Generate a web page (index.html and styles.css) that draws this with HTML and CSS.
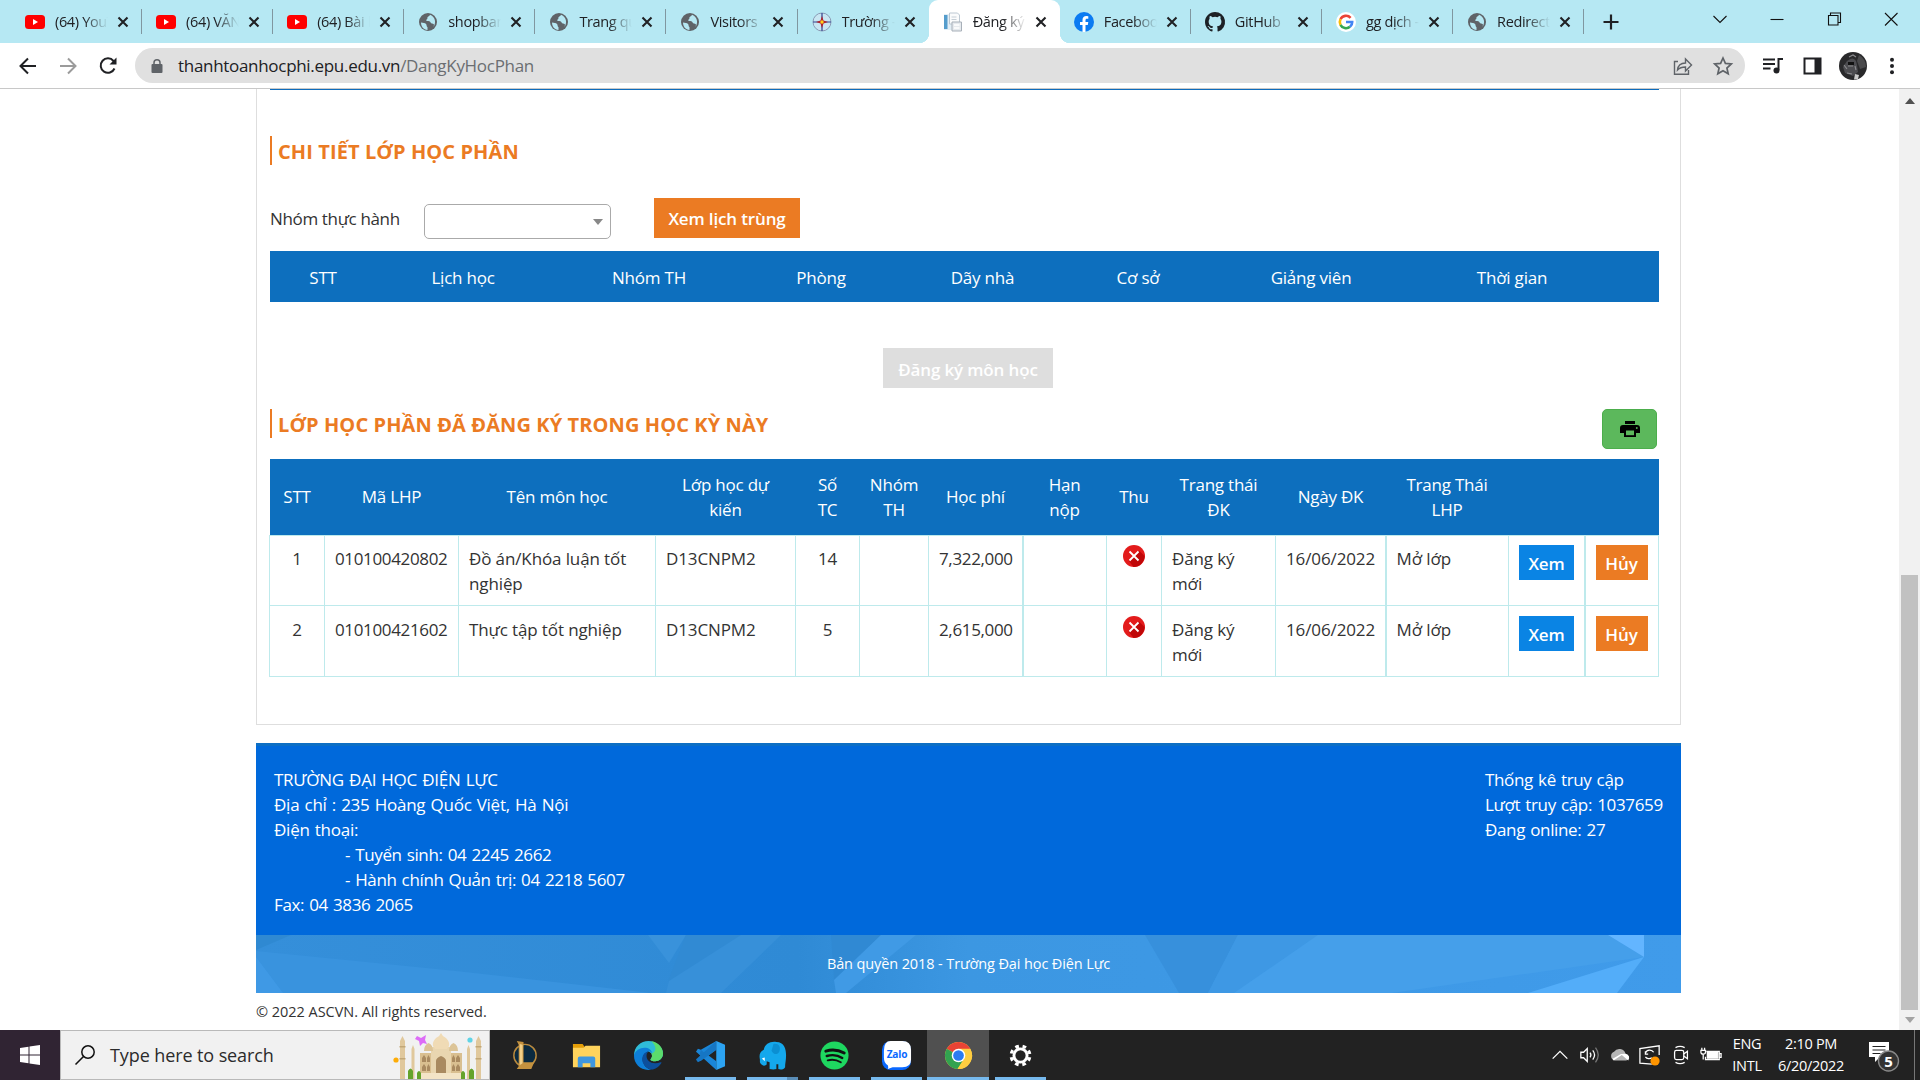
FILE: index.html
```html
<!DOCTYPE html>
<html lang="vi">
<head>
<meta charset="utf-8">
<title>Đăng ký học phần</title>
<link rel="stylesheet" href="styles.css">
</head>
<body>
<svg width="0" height="0" class="defs">
  <defs>
    <symbol id="yt" viewBox="0 0 20 20"><rect y="3" width="20" height="14" rx="3.5" fill="#f00"/><path d="M8 7v6l5-3z" fill="#fff"/></symbol>
    <symbol id="globe" viewBox="0 0 20 20"><circle cx="10" cy="10" r="9" fill="#5f6368"/><path d="M3 10.5c2 .5 4 .3 5 1.6 1 1.100.2 2.300 1.500 3.200V18C5.500 17.800 3 14.500 3 10.500zM12 2.800c-.3 1.500-1.500 1.400-2.300 2.200-.7.700.2 2-1 2.500-.8.300-.7 1.500.4 1.500 1.700 0 3 .2 3.500 1.500.4 1.200 2.400.7 3.200 1.800.5.800-.2 1.700-.3 2.400 2.500-3 2.500-9.500-3.500-11.900z" fill="#b6e8f3"/></symbol>
    <symbol id="x" viewBox="0 0 12 12"><path d="M1.500 1.500l9 9m0-9l-9 9" stroke="#202124" stroke-width="2.100" fill="none"/></symbol>
    <symbol id="fail" viewBox="0 0 22 22"><circle cx="11" cy="11" r="11" fill="#e31b1b"/><path d="M16 5.500l5.500 5.500a11 11 0 0 1-11 11L6 16z" fill="#c00708"/><path d="M6.500 6.500l9 9m0-9l-9 9" stroke="#fff" stroke-width="1.800"/></symbol>
  </defs>
</svg>

<div class="tabs">
  <div class="tab"><svg class="fav"><use href="#yt"/></svg><span>(64) YouTube</span><svg class="close"><use href="#x"/></svg></div>
  <div class="tab"><svg class="fav"><use href="#yt"/></svg><span>(64) VĂN MAI</span><svg class="close"><use href="#x"/></svg></div>
  <div class="tab"><svg class="fav"><use href="#yt"/></svg><span>(64) Bài hát</span><svg class="close"><use href="#x"/></svg></div>
  <div class="tab"><svg class="fav"><use href="#globe"/></svg><span>shopbanhang</span><svg class="close"><use href="#x"/></svg></div>
  <div class="tab"><svg class="fav"><use href="#globe"/></svg><span>Trang quản trị</span><svg class="close"><use href="#x"/></svg></div>
  <div class="tab"><svg class="fav"><use href="#globe"/></svg><span>Visitors</span><svg class="close"><use href="#x"/></svg></div>
  <div class="tab plain"><svg class="fav" viewBox="0 0 20 20"><circle cx="10" cy="10" r="9" fill="#c8e6f2" stroke="#8b9bb5"/><path d="M10 1v18M1 10h18" stroke="#31418c" stroke-width="1.200"/><path d="M10 4l1.500 4.500 4.500 1.500-4.500 1.500-1.500 4.500-1.500-4.500-4.500-1.500 4.500-1.500z" fill="#b3232b"/><circle cx="10" cy="10" r="1.700" fill="#ffd21c"/></svg><span>Trường - Đại</span><svg class="close"><use href="#x"/></svg></div>
  <div class="tab active"><svg class="fav" viewBox="0 0 20 20"><path d="M1 2h9v16H1z" fill="#e3eef5"/><path d="M1 3h3.500v14H1z" fill="#559dcc"/><path d="M6.500 1h8l2 2v9h-10z" fill="#fafbfc" stroke="#bcc8d2"/><path d="M8.500 5h5M8.500 7.500h5" stroke="#c5ced6"/><path d="M9 10h9.500v9H9z" fill="#e6eaee" stroke="#a8b0b9"/><path d="M11 13h5.500M11 16h5.500" stroke="#fff" stroke-width="1.500"/></svg><span>Đăng ký học</span><svg class="close"><use href="#x"/></svg></div>
  <div class="tab"><svg class="fav" viewBox="0 0 20 20"><circle cx="10" cy="10" r="10" fill="#0b7bf2"/><path d="M8.500 20v-7H6v-3h2.500V8c0-2.600 1.500-4 3.800-4l2 .2v2.500H13c-1.200 0-1.500.7-1.500 1.500V10h2.800l-.5 3h-2.300v7z" fill="#fff"/></svg><span>Facebook</span><svg class="close"><use href="#x"/></svg></div>
  <div class="tab"><svg class="fav" viewBox="0 0 16 16"><path fill="#1d2126" d="M8 0C3.580 0 0 3.580 0 8c0 3.540 2.290 6.530 5.470 7.590.4.070.55-.17.55-.38v-1.490c-2.010.37-2.530-.49-2.690-.94-.09-.23-.48-.94-.82-1.130-.28-.15-.68-.52-.01-.53.63-.01 1.080.58 1.230.82.72 1.210 1.870.87 2.330.66.070-.52.28-.87.510-1.070-1.780-.2-3.640-.89-3.640-3.950 0-.87.310-1.590.82-2.150-.08-.2-.36-1.020.08-2.120 0 0 .67-.21 2.200.82a7.600 7.600 0 0 1 4 0c1.530-1.040 2.200-.82 2.200-.82.440 1.100.16 1.920.08 2.120.51.560.82 1.270.82 2.150 0 3.070-1.870 3.750-3.650 3.950.29.250.54.730.54 1.480v2.200c0 .21.150.46.550.38A8 8 0 0 0 8 0z"/></svg><span>GitHub</span><svg class="close"><use href="#x"/></svg></div>
  <div class="tab"><svg class="fav" viewBox="0 0 20 20"><circle cx="10" cy="10" r="10" fill="#fff"/><g fill="none" stroke-width="2.600"><path d="M14.600 5.800A6.200 6.200 0 0 0 4.500 7.200" stroke="#ea4335"/><path d="M4.500 7.200a6.200 6.200 0 0 0 0 5.600" stroke="#fbbc05"/><path d="M4.500 12.800a6.200 6.200 0 0 0 9.500 2" stroke="#34a853"/><path d="M14 14.800A6 6 0 0 0 16.200 10H10" stroke="#4285f4"/></g></svg><span>gg dịch - Tìm</span><svg class="close"><use href="#x"/></svg></div>
  <div class="tab"><svg class="fav"><use href="#globe"/></svg><span>Redirecting</span><svg class="close"><use href="#x"/></svg></div>
  <svg class="plus" viewBox="0 0 16 16"><path d="M8 .5v15M.5 8h15" stroke="#202124" stroke-width="2.200"/></svg>
  <div class="winctl">
    <svg viewBox="0 0 16 16"><path d="M1.500 5L8 11.500 14.500 5"/></svg>
    <svg viewBox="0 0 16 16"><path d="M1.500 8.500h13"/></svg>
    <svg viewBox="0 0 16 16"><path d="M2.500 4.500h9.500V14H2.500zM4.500 4.500v-2.500H14.500v9.500h-2.500"/></svg>
    <svg viewBox="0 0 16 16"><path d="M2 2l12.500 12.500m0-12.500L2 14.500"/></svg>
  </div>
</div>

<div class="toolbar">
  <svg class="nav" viewBox="0 0 20 20"><path d="M18 10H3M10 2.500L2.500 10l7.500 7.500" stroke="#202124"/></svg>
  <svg class="nav" viewBox="0 0 20 20"><path d="M2 10h15M10 2.500l7.500 7.500-7.500 7.500" stroke="#9b9b9b"/></svg>
  <svg class="nav" viewBox="0 0 20 20"><path d="M16.500 12.500A7.200 7.200 0 1 1 15.500 5l1 1.200" stroke="#202124"/><path d="M18.500 1.500v7h-7z" fill="#202124"/></svg>
  <div class="url">
    <svg class="lock" viewBox="0 0 12 14"><rect x=".5" y="5" width="11" height="9" rx="1" fill="#5f6368"/><path d="M3 6V3.800a3 3 0 0 1 6 0V6" fill="none" stroke="#5f6368" stroke-width="1.500"/></svg>
    <div class="addr">thanhtoanhocphi.epu.edu.vn<i>/DangKyHocPhan</i></div>
    <svg class="ic" viewBox="0 0 20 20"><path d="M5 5.500H1.500v12.800h14V14M4.500 14c.5-4.500 3.500-7 8-7V3l6 6-6 6v-4c-3.500 0-6 .8-8 3z" fill="none" stroke="#5f6368" stroke-width="1.400"/></svg>
    <svg class="ic" viewBox="0 0 20 20"><path d="M10 2l2.400 5.400 5.900.6-4.400 4 1.300 5.800L10 14.800l-5.200 3L6.100 12 1.700 8l5.900-.6z" fill="none" stroke="#5f6368" stroke-width="1.700"/></svg>
  </div>
  <svg class="act" viewBox="0 0 20 20"><path d="M0 3.500h12M0 8h12M0 12.500h7.500" stroke="#202124" stroke-width="2"/><path d="M15.500 14V3h4.500" fill="none" stroke="#202124" stroke-width="2"/><circle cx="13.500" cy="14.500" r="3" fill="#202124"/></svg>
  <svg class="act panel" viewBox="0 0 20 20"><path d="M1.500 2.500h16v15h-16z" fill="#fff" stroke="#202124" stroke-width="2"/><path d="M11.500 2h6v16h-6z" fill="#202124"/></svg>
  <svg class="avatar" viewBox="0 0 28 28"><circle cx="14" cy="14" r="14" fill="#29292b"/><path d="M20 3q7 4 7 12l-6 2-3-8z" fill="#4a4a4c"/><path d="M8 9q6-5 9 0l1 4 1 7-5 4-8-3-2-6z" fill="#4c4c50"/><path d="M10 5l4-2 3 2M5 13l3 4M9 14h5M8 21l5 1M16 14l1 4" stroke="#8b8b8e" stroke-width="1.100" fill="none"/><path d="M16 22l4 1-1 4-4 .5z" fill="#c9c9c9"/><path d="M9 10h6v3H9z" fill="#111"/></svg>
  <svg class="act dots" viewBox="0 0 20 20"><g fill="#202124"><circle cx="10" cy="3.800" r="2"/><circle cx="10" cy="10" r="2"/><circle cx="10" cy="16.200" r="2"/></g></svg>
</div>

<div class="viewport">
  <div class="page">
    <div class="card">
      <h2 class="first">CHI TIẾT LỚP HỌC PHẦN</h2>
      <div class="filter">
        <label>Nhóm thực hành</label>
        <div class="select"></div>
        <div class="btn orange">Xem lịch trùng</div>
      </div>
      <div class="schedule">
        <span>STT</span><span>Lịch học</span><span>Nhóm TH</span><span>Phòng</span><span>Dãy nhà</span><span>Cơ sở</span><span>Giảng viên</span><span>Thời gian</span>
      </div>
      <div class="register"><div class="btn disabled">Đăng ký môn học</div></div>
      <div class="title-row">
        <h2 class="second">LỚP HỌC PHẦN ĐÃ ĐĂNG KÝ TRONG HỌC KỲ NÀY</h2>
        <div class="print"><svg viewBox="0 0 20 16"><path d="M5 0h10v3H5z"/><path d="M3 4h14a3 3 0 0 1 3 3v5h-4v4H4v-4H0V7a3 3 0 0 1 3-3z"/><path d="M6 9.500h8v4.700H6z" fill="#5cb85c"/><circle cx="16.800" cy="7" r=".9" fill="#5cb85c"/></svg></div>
      </div>
      <table class="classes">
        <colgroup><col style="width:55px"><col style="width:134px"><col style="width:197px"><col style="width:140px"><col style="width:64px"><col style="width:69px"><col style="width:94px"><col style="width:84px"><col style="width:55px"><col style="width:114px"><col style="width:110px"><col style="width:123px"><col style="width:76px"><col style="width:74px"></colgroup>
        <thead><tr><th>STT</th><th>Mã LHP</th><th>Tên môn học</th><th>Lớp học dự<br>kiến</th><th>Số<br>TC</th><th>Nhóm<br>TH</th><th>Học phí</th><th>Hạn<br>nộp</th><th>Thu</th><th>Trang thái<br>ĐK</th><th>Ngày ĐK</th><th>Trang Thái<br>LHP</th><th></th><th></th></tr></thead>
        <tbody>
          <tr><td class="c">1</td><td class="num">010100420802</td><td>Đồ án/Khóa luận tốt<br>nghiệp</td><td>D13CNPM2</td><td class="c">14</td><td></td><td class="num thick">7,322,000</td><td></td><td class="c"><svg class="fail"><use href="#fail"/></svg></td><td>Đăng ký<br>mới</td><td class="thick">16/06/2022</td><td>Mở lớp</td><td class="thick"><div class="mini blue">Xem</div></td><td><div class="mini orange">Hủy</div></td></tr>
          <tr><td class="c">2</td><td class="num">010100421602</td><td>Thực tập tốt nghiệp</td><td>D13CNPM2</td><td class="c">5</td><td></td><td class="num thick">2,615,000</td><td></td><td class="c"><svg class="fail"><use href="#fail"/></svg></td><td>Đăng ký<br>mới</td><td class="thick">16/06/2022</td><td>Mở lớp</td><td class="thick"><div class="mini blue">Xem</div></td><td><div class="mini orange">Hủy</div></td></tr>
        </tbody>
      </table>
    </div>
    <div class="footer">
      <div>TRƯỜNG ĐẠI HỌC ĐIỆN LỰC<br>Địa chỉ : 235 Hoàng Quốc Việt, Hà Nội<br>Điện thoại:<div class="indent">- Tuyển sinh: 04 2245 2662<br>- Hành chính Quản trị: 04 2218 5607</div><span class="tight">Fax: 04 3836 2065</span></div>
      <div class="stats">Thống kê truy cập<br>Lượt truy cập: 1037659<br>Đang online: 27</div>
    </div>
    <div class="copy">
      <svg class="poly" viewBox="0 0 1425 58" preserveAspectRatio="none">
        <defs><linearGradient id="g"><stop offset="0" stop-color="#358fda"/><stop offset=".38" stop-color="#2f8ad5"/><stop offset=".5" stop-color="#3c97e2"/><stop offset="1" stop-color="#409bea"/></linearGradient></defs>
        <path d="M0 0h1425v58H0z" fill="url(#g)"/>
        <path d="M0 0h35L0 15z" fill="#2f89d2"/><path d="M0 16L200 36 395 58H0z" fill="#3993de"/><path d="M0 22l27 36H0z" fill="#3f99e5"/>
        <path d="M392 0h38l-17 28z" fill="#3992db"/><path d="M430 0h95L412 46z" fill="#318ad3"/><path d="M485 0h40l-60 58h-55l3-12z" fill="#3790d9"/>
        <path d="M575 0h50l-47 45z" fill="#3089d3"/><path d="M625 0h35L590 58h-10l-2-13z" fill="#409ae5"/>
        <path d="M889 0h93l-30 58h-29z" fill="#3790dc"/><path d="M982 0h80l-84 58h-26z" fill="#3e98e4"/><path d="M1062 0h290l36 22-252 36H978z" fill="#459fea"/>
        <path d="M1352 0h36v22z" fill="#63b5ff"/><path d="M1388 22l-27 36h-89z" fill="#53adf9"/>
      </svg>
      <span>Bản quyền 2018 - Trường Đại học Điện Lực</span>
    </div>
    <div class="rights">© 2022 ASCVN. All rights reserved.</div>
  </div>
  <div class="scroll"><div class="up"></div><div class="thumb"></div><div class="down"></div></div>
</div>

<div class="taskbar">
  <div class="start"><svg viewBox="0 0 20 20"><path d="M0 3l8.500-1.200v7.700H0zM9.500 1.600L20 0v9.500H9.500zM0 10.500h8.500v7.700L0 17zM9.500 10.500H20V20L9.500 18.400z" fill="#fff"/></svg></div>
  <div class="search">
    <svg class="lens" viewBox="0 0 20 20"><circle cx="13" cy="7" r="6.200" fill="none" stroke="#111" stroke-width="1.500"/><path d="M8.500 11.500L.5 19.500" stroke="#111" stroke-width="1.600"/></svg>
    <span>Type here to search</span>
    <svg class="taj" viewBox="0 0 90 46">
      <g fill="#e0c89c"><path d="M7 46V8l2.500-5L12 8v38zM83 46V8l2.500-5L88 8v38zM18.500 46V16l1.500-4 1.500 4v30zM74 46V16l1.500-4 1.500 4v30z"/><path d="M27 20h42v26H27z" fill="#d9bf90"/><path d="M38 14h20v32H38z" fill="#e9d6b0"/></g>
      <path d="M6.500 13h6v1.500h-6zM6.500 25h6v1.500h-6zM82.500 13h6v1.500h-6zM82.500 25h6v1.500h-6z" fill="#c2a777"/>
      <path d="M48 0q1 3 5 5 4 4 3 8l-2 3H42l-2-3q-1-4 3-8 4-2 5-5z" fill="#f0dbb5"/>
      <path d="M31 18q0-6 4.500-8 4.500 2 4.500 8zM56 18q0-6 4.500-8 4.500 2 4.500 8z" fill="#dcc497"/>
      <path d="M43 40V28q0-3 5-5 5 2 5 5v12z" fill="#a98a60"/><path d="M29 29v-4l2-3 2 3v4zM34 29v-4l1.500-3 1.500 3v4zM59 29v-4l1.500-3 1.500 3v4zM63 29v-4l2-3 2 3v4zM29 38v-4l2-3 2 3v4zM34 38v-4l1.500-3 1.500 3v4zM59 38v-4l1.500-3 1.500 3v4zM63 38v-4l2-3 2 3v4z" fill="#a98a60"/>
      <path d="M26 40h44v6H26z" fill="#f3e4c6"/><path d="M15 46v-8q2.500-5 5 0v8zM24 46v-6q2-4 4 0v6zM68 46v-6q2-4 4 0v6zM76 46v-8q2.500-5 5 0v8z" fill="#64a32b"/>
      <path d="M24 3l4 2 5-3-1 5 2 4-4-1-3 3-1-5-4-2z" fill="#dd6cf7"/><circle cx="77" cy="7" r="2.600" fill="#5fd4e6"/><circle cx="3" cy="27" r="2.600" fill="#fdac08"/>
    </svg>
  </div>
  <div class="apps">
    <div class="app"><svg viewBox="0 0 32 32"><circle cx="16.500" cy="16" r="11.500" fill="#0a2a40" stroke="#b98a3e" stroke-width="1.500"/><path d="M8 1l7 1v21h11l-3 7H8l2-3V5z" fill="#c4923f"/><path d="M11 4l3 1v19l-3 2z" fill="#f0cf88"/></svg></div>
    <div class="app"><svg viewBox="0 0 32 32"><path d="M2 4h10l2 3v6H2z" fill="#e59e07"/><path d="M2 8h11l2-2h15v22H2z" fill="#ffd35c"/><path d="M7 28V19q0-2 2-2h14q2 0 2 2v9h-5v-4h-8v4z" fill="#3f97df"/></svg></div>
    <div class="app"><svg viewBox="0 0 32 32"><path d="M1 16C1 7 8 1 16 1s15 6 15 13c0 5-4 8-8 8-3 0-5-1-5-2 2-2 2-4 1-6-4-5-14-4-18 2z" fill="#2fbcd8"/><path d="M19 1.300c7 1 12 6.500 12 12.700 0 5-4 8-8 8-3 0-5-1-5-2 2-2 2-4 1-6 6-2 5-8 0-12.700z" fill="#5bdc6c"/><path d="M1 16c1-5 6-8 11-8 4 0 7 2 8 6-1-2-3-2.500-5-2-5 2-6 8-4 12 1 3 4 6 8 6.500-10 2-18-5-18-14.500z" fill="#0e7fd8"/><path d="M14.500 12c-5 2-6 8-4 12s6 7 10 6.500c4-1 7-3.500 9-7 0-.6-.5-.8-1-.5-8 3-15-1-14.500-7 0-1.600.5-3 2-4z" fill="#0c4f9c"/></svg></div>
    <div class="app run"><svg viewBox="0 0 32 32"><path d="M22 1v30L2 13l-1-1 2-3 3 1z" fill="#1a86d8"/><path d="M22 10v12l-8-6z" fill="#222"/><path d="M1 20l2 3 4-2 15-11V1L2 19z" fill="#1676c4"/><path d="M6 10l4 3.500-4 3.500-1-3z" fill="#1676c4"/><path d="M1 13.500L4.500 16 1 18.500z" fill="#222"/><path d="M22 1l9 4v22l-9 4z" fill="#2ca3f2"/></svg></div>
    <div class="app run split"><svg viewBox="0 0 32 32"><path d="M3 20c-1-5 0-8 4-10 1-6 7-9 13-8 8 0 10 7 10 14 0 5-1 8-1 12-1 2-4 3-7 2v-5h-2v5q-3 1-7 0v-7l-3-1v3c-2 3-6 1-7-2z" fill="#14a8ec"/><path d="M17 4c5-1 8 3 6 8-2 4-6 3-8-1z" fill="#0b8fd2"/><path d="M5 19l3-1v4z" fill="#fff"/></svg></div>
    <div class="app run"><svg viewBox="0 0 32 32"><circle cx="16" cy="16" r="14.500" fill="#1ed760"/><g fill="none" stroke="#111" stroke-linecap="round"><path d="M7 11.500q10-3 19 2" stroke-width="3"/><path d="M8 16.500q9-2.500 16 2" stroke-width="2.500"/><path d="M9 21q7-2 13.500 2" stroke-width="2"/></g></svg></div>
    <div class="app run"><svg viewBox="0 0 32 32"><rect x="1" y="1" width="30" height="30" rx="9" fill="#0a68ff"/><path d="M10 1h12q9 0 9 9v10q0 8-9 8H12l-5 2q1-2 0-4-4-2-4-8v-7q0-10 7-10z" fill="#fff"/><text x="16.500" y="19" text-anchor="middle" class="zalo">Zalo</text></svg></div>
    <div class="app run on"><svg viewBox="0 0 32 32"><circle cx="16" cy="16" r="14" fill="#ffcd40"/><path d="M16 16L3.900 9A14 14 0 0 1 28.100 9z" fill="#e94335"/><path d="M3.900 9A14 14 0 0 0 15 30l7-11-6-3z" fill="#32a350"/><path d="M16 9h12.100A14 14 0 0 1 15 30l7-11z" fill="#ffcd40"/><circle cx="16" cy="16" r="7" fill="#fff"/><circle cx="16" cy="16" r="5.500" fill="#2c7bf0"/></svg></div>
    <div class="app run"><svg viewBox="0 0 32 32"><circle cx="16" cy="16" r="6.800" fill="none" stroke="#fff" stroke-width="3"/><circle cx="16" cy="16" r="9.700" fill="none" stroke="#fff" stroke-width="3.200" stroke-dasharray="3.800 3.820" transform="rotate(11 16 16)"/></svg></div>
  </div>
  <div class="tray">
    <svg viewBox="0 0 24 24"><path d="M4 16l8-8 8 8"/></svg>
    <svg viewBox="0 0 24 24"><path d="M2 9h3l4-4v14l-4-4H2zM12 9.500q2 2.500 0 5M15 7q4 5 0 10"/><path d="M18 4q6 8 0 16" stroke="#777"/></svg>
    <svg viewBox="0 0 24 24"><path d="M6 18a5 5 0 0 1-.5-9.500 7 7 0 0 1 12.500 2 4 4 0 0 1 1 7.500z" fill="#b5b5b5" stroke="none"/><path d="M5 18l9-6 7 6q3-6-3-7.500l-5 .5-9 5z" fill="#fff" stroke="none"/></svg>
    <svg viewBox="0 0 24 24"><path d="M22 12V2L1 5v16l13 1M16 9a5 5 0 0 0-9 1M7 8v3h3M7 14a5 5 0 0 0 7 1"/><circle cx="17.500" cy="18.500" r="5" fill="#ff9500" stroke="none"/></svg>
    <svg viewBox="0 0 24 24"><rect x="5" y="7" width="10" height="10" rx="2"/><path d="M15 11l4-3v8l-4-3M6 4q5-3 10 0M6 20q5 3 10 0"/></svg>
    <svg viewBox="0 0 24 24"><path d="M7 8h14v9H6v-3M21 10.500h2v4h-2M1 7h5v2q0 2-2.500 2T1 9zM2 7V4M5 7V4M3.500 11v6"/><path d="M8 9.500h11.500v6H8z" fill="#fff"/></svg>
    <div class="lang">ENG<br>INTL</div>
    <div class="clock">2:10 PM<br>6/20/2022</div>
    <div class="notif"><svg viewBox="0 0 34 34"><path d="M2 4h20v15h-9l-5 5v-5H2z" fill="#fff" stroke="none"/><path d="M5.500 8.500h13M5.500 12h13M5.500 15.500h8" stroke="#222" stroke-width="1.200"/><circle cx="21.500" cy="23" r="10" fill="#333" stroke="#888"/><text x="21.500" y="28.500" text-anchor="middle" class="badge">5</text></svg></div>
    <div class="peek"></div>
  </div>
</div>
</body>
</html>
```
FILE: styles.css
```css
* { box-sizing: border-box; }
body { margin: 0; width: 1920px; height: 1080px; overflow: hidden; background: #fff; color: #333; font-family: "Open Sans", "Noto Sans", sans-serif; font-size: 17px; line-height: 25px; letter-spacing: -0.22px; display: flex; flex-direction: column; }
svg { display: block; flex: none; overflow: visible; }
.defs { display: none; }

.tabs { height: 43px; flex: none; background: #b6e8f3; display: flex; align-items: center; padding-left: 11px; }
.tab { width: 131.100px; height: 43px; flex: none; display: flex; align-items: center; padding-left: 14px; position: relative; }
.tab::after { content: ""; position: absolute; right: 0; top: 9px; width: 1px; height: 25px; background: #8097a0; }
.tab.plain::after, .tab.active::after { display: none; }
.tab.active { background: #fff; border-radius: 9px 9px 0 0; }
.tab.active::before { content: ""; position: absolute; left: -10px; right: -10px; bottom: 0; height: 10px; background: radial-gradient(circle at 0 0, transparent 10px, #fff 10.500px) left / 10px 10px no-repeat, radial-gradient(circle at 100% 0, transparent 10px, #fff 10.500px) right / 10px 10px no-repeat; }
.fav { width: 20px; height: 20px; }
.tab span { width: 53px; margin-left: 10px; margin-top: -1px; overflow: hidden; white-space: nowrap; font-size: 14.500px; letter-spacing: -0.35px; color: #202124; -webkit-mask-image: linear-gradient(90deg, #000 55%, transparent); mask-image: linear-gradient(90deg, #000 55%, transparent); }
.close { width: 12px; height: 12px; margin-left: 9px; }
.plus { width: 16px; height: 16px; margin-left: 19px; }
.winctl { margin-left: auto; display: flex; gap: 41px; padding: 0 21px 6px 0; }
.winctl svg { width: 16px; height: 16px; fill: none; stroke: #111; stroke-width: 1.100; }

.toolbar { height: 46px; flex: none; border-bottom: 1px solid #c8c8c8; display: flex; align-items: center; padding-left: 18px; }
.nav { width: 20px; height: 20px; margin-right: 20px; fill: none; stroke-width: 2; }
.url { width: 1610px; height: 35px; margin-left: -3px; border-radius: 18px; background: #e0e0e0; display: flex; align-items: center; padding: 0 12px 0 16px; }
.lock { width: 12px; height: 14px; }
.addr { margin-left: 15px; flex: 1; font-size: 17px; letter-spacing: -0.3px; color: #202124; }
.addr i { font-style: normal; color: #6b6e72; }
.ic { width: 20px; height: 20px; margin-left: 20px; }
.act { width: 20px; height: 20px; margin-left: 18px; }
.panel { margin-left: 20px; }
.avatar { width: 28px; height: 28px; margin-left: 16px; }
.dots { margin-left: 15px; }

.viewport { height: 941px; flex: none; display: flex; justify-content: space-between; }
.page { width: 1425px; margin-left: 256px; }
.card { height: 636px; border: 1px solid #dedede; border-top: 0; padding: 0 21px 0 13px; }
.card::before { content: ""; display: block; height: 1px; background: #0d6cbc; }
h2 { margin: 0; height: 29px; border-left: 2px solid #eb7b23; padding-left: 6px; color: #eb7b23; font-size: 20px; line-height: 32px; font-weight: 700; letter-spacing: 0.1px; white-space: nowrap; }
.first { margin-top: 46px; }
.second { align-self: flex-start; }
.filter { display: flex; align-items: flex-start; height: 53px; margin-top: 33px; }
.filter label { width: 154px; padding-top: 8px; letter-spacing: -0.35px; }
.select { width: 187px; height: 35px; margin-top: 6px; border: 1px solid #aaa; border-radius: 5px; display: flex; align-items: center; justify-content: flex-end; padding-right: 7px; }
.select::after { content: ""; border: 5px solid transparent; border-top: 6px solid #888; border-bottom: 0; }
.btn { height: 40px; line-height: 41px; padding: 0; text-align: center; font-weight: 600; letter-spacing: -0.15px; color: #fff; }
.orange { background: #eb7b23; }
.filter .btn { width: 146px; margin-left: 43px; }
.schedule { height: 51px; background: #0d6fbe; color: #fff; display: grid; grid-template-columns: 106px 174px 198px 146px 177px 134px 212px 190px; align-items: center; text-align: center; padding-top: 2px; }
.register { display: flex; justify-content: center; margin-top: 46px; }
.disabled { width: 170px; background: #dedede; line-height: 43px; margin-left: 7px; }
.title-row { display: flex; justify-content: space-between; margin-top: 21px; height: 50px; }
.print { width: 55px; height: 40px; margin-right: 2px; background: #5cb85c; border: 1px solid #4cae4c; border-radius: 5px; display: flex; align-items: center; justify-content: center; }
.print svg { width: 20px; height: 16px; }
.classes { border-collapse: collapse; table-layout: fixed; width: 1389px; margin-left: -1px; }
th { background: #0d6fbe; color: #fff; font-weight: 400; height: 76px; padding: 0; white-space: nowrap; }
td { border: 1px solid #beeaec; height: 71px; padding: 10px 0 0 10px; vertical-align: top; white-space: nowrap; letter-spacing: -0.12px; }
tbody tr:first-child td { height: 70px; }
tbody tr:last-child td { padding-top: 11px; }
td.thick { border-right-width: 2px; }
td.num { letter-spacing: -0.35px; }
td.c { padding-left: 0; text-align: center; }
.fail { width: 22px; height: 22px; margin: -1px auto 0; }
.mini { height: 35px; margin-top: -1px; line-height: 37px; text-align: center; color: #fff; font-weight: 600; }
.mini.blue { width: 55px; background: #0a84e4; }
.mini.orange { width: 52px; }

.footer { margin-top: 18px; height: 192px; border-top: 3px solid #0d6fc4; background: #0069db; color: #fff; display: flex; justify-content: space-between; padding: 21px 0 0 18px; letter-spacing: -0.25px; word-spacing: 1px; }
.indent { padding-left: 71px; letter-spacing: -0.36px; }
.tight { letter-spacing: -0.36px; }
.stats { width: 196px; letter-spacing: -0.34px; }
.copy { height: 58px; position: relative; display: flex; align-items: center; justify-content: center; color: #fff; font-size: 14.500px; letter-spacing: -0.11px; padding-bottom: 2px; }
.poly { position: absolute; inset: 0; width: 100%; height: 100%; }
.copy span { position: relative; }
.rights { padding-top: 6px; font-size: 14.500px; letter-spacing: -0.03px; }
.scroll { width: 21px; background: #f1f1f1; display: flex; flex-direction: column; align-items: center; padding-top: 9px; }
.up { border: 5px solid transparent; border-bottom: 6px solid #505050; border-top: 0; }
.thumb { margin-top: 471px; width: 17px; height: 435px; background: #c1c1c1; }
.down { margin-top: 7px; border: 5px solid transparent; border-top: 6px solid #a3a3a3; border-bottom: 0; }

.taskbar { height: 50px; flex: none; background: #222; display: flex; color: #fff; }
.start { width: 60px; background: #302433; display: flex; align-items: center; justify-content: center; }
.start svg { width: 20px; height: 20px; }
.search { width: 430px; background: #f1f1f1; border: 1px solid #b9b9b9; display: flex; align-items: center; padding-left: 14px; }
.lens { width: 20px; height: 20px; }
.search span { margin-left: 15px; font-size: 18px; letter-spacing: -0.1px; color: #2b2b2b; flex: 1; }
.taj { width: 90px; height: 46px; margin: 2px 6px 0 0; }
.apps { display: flex; margin-left: 3px; }
.app { width: 62px; display: flex; align-items: center; justify-content: center; position: relative; }
.app svg { width: 31px; height: 31px; }
.run::after { content: ""; position: absolute; left: 6px; right: 5px; bottom: 0; height: 3px; background: #76b9ed; }
.split::after { background: linear-gradient(90deg, #76b9ed 79%, #5a8db7 79%); }
.on { background: #505050; }
.on::after { left: 0; right: 0; }
.zalo { font: 700 10.500px "Open Sans", sans-serif; fill: #0a68ff; letter-spacing: -0.2px; word-spacing: 0; }
.tray { margin-left: auto; display: flex; align-items: center; }
.tray svg { width: 22px; height: 22px; margin-right: 8.200px; fill: none; stroke: #fff; stroke-width: 1.400; }
.lang, .clock { font-size: 14.500px; line-height: 22px; text-align: center; letter-spacing: -0.3px; }
.lang { width: 32px; margin-left: 1px; }
.clock { width: 70px; margin-left: 13px; }
.notif { width: 34px; margin-left: 21px; }
.notif svg { width: 34px; height: 34px; margin: 0; }
.badge { font: 700 15px "Open Sans", sans-serif; fill: #fff; stroke: none; }
.peek { width: 1px; height: 50px; background: #777; margin: 0 5px 0 13px; }
```
